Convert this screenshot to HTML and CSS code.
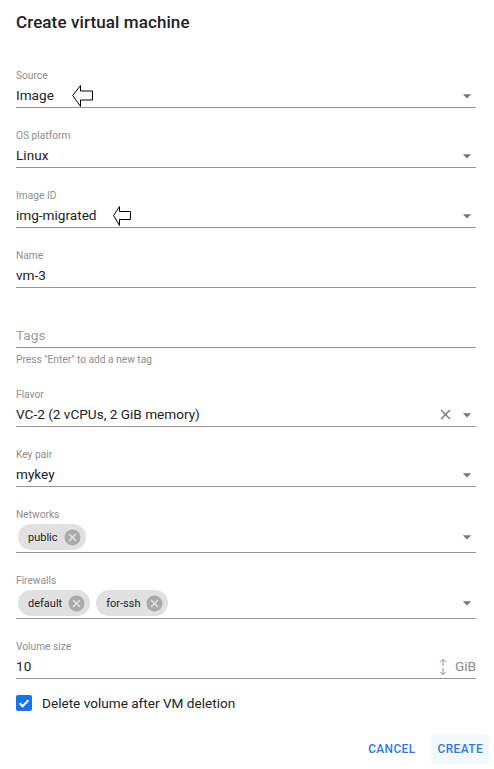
FILE: index.html
```html
<!DOCTYPE html>
<html lang="en">
<head>
<meta charset="utf-8">
<title>Create virtual machine</title>
<link rel="stylesheet" href="styles.css">
</head>
<body>
<div class="dialog">
  <h2 class="title">Create virtual machine</h2>
  <div class="content">
    <div class="field">
      <div class="label">Source</div>
      <div class="input">
        <span class="value">Image</span>
        <svg class="pointer" width="21" height="22" viewBox="0 0 21 22"><polygon points="0.7,10.5 8.5,0.5 8.5,6 20.5,6 20.5,15 8.5,15 8.5,21.5" fill="#fff" stroke="#000" stroke-width="1"/></svg>
        <span class="grow"></span>
        <svg class="dd" viewBox="0 0 24 24"><path d="M7 10l5 5 5-5z"/></svg>
      </div>
    </div>
    <div class="field">
      <div class="label">OS platform</div>
      <div class="input">
        <span class="value">Linux</span>
        <span class="grow"></span>
        <svg class="dd" viewBox="0 0 24 24"><path d="M7 10l5 5 5-5z"/></svg>
      </div>
    </div>
    <div class="field">
      <div class="label">Image ID</div>
      <div class="input">
        <span class="value">img-migrated</span>
        <svg class="pointer small" width="18" height="20" viewBox="0 0 18 20"><polygon points="0.6,9.5 6.5,0.5 6.5,5.5 17.5,5.5 17.5,13.5 6.5,13.5 6.5,19.5" fill="#fff" stroke="#000" stroke-width="1"/></svg>
        <span class="grow"></span>
        <svg class="dd" viewBox="0 0 24 24"><path d="M7 10l5 5 5-5z"/></svg>
      </div>
    </div>
    <div class="field">
      <div class="label">Name</div>
      <div class="input">
        <span class="value">vm-3</span>
      </div>
    </div>
    <div class="field">
      <div class="label"></div>
      <div class="input placeholder-row">
        <span class="placeholder">Tags</span>
      </div>
      <div class="helper">Press "Enter" to add a new tag</div>
    </div>
    <div class="field">
      <div class="label">Flavor</div>
      <div class="input">
        <span class="value">VC-2 (2 vCPUs, 2 GiB memory)</span>
        <span class="grow"></span>
        <svg class="clear" viewBox="0 0 24 24"><path d="M19 6.41L17.59 5 12 10.59 6.41 5 5 6.41 10.59 12 5 17.59 6.41 19 12 13.41 17.59 19 19 17.59 13.41 12z"/></svg>
        <svg class="dd" viewBox="0 0 24 24"><path d="M7 10l5 5 5-5z"/></svg>
      </div>
    </div>
    <div class="field">
      <div class="label">Key pair</div>
      <div class="input">
        <span class="value">mykey</span>
        <span class="grow"></span>
        <svg class="dd" viewBox="0 0 24 24"><path d="M7 10l5 5 5-5z"/></svg>
      </div>
    </div>
    <div class="field">
      <div class="label">Networks</div>
      <div class="input chips">
        <span class="chip"><span class="chip-label">public</span><svg class="chip-del" viewBox="0 0 24 24"><path d="M12 2C6.47 2 2 6.47 2 12s4.47 10 10 10 10-4.47 10-10S17.53 2 12 2zm5 13.59L15.59 17 12 13.41 8.41 17 7 15.59 10.59 12 7 8.41 8.41 7 12 10.59 15.59 7 17 8.41 13.41 12 17 15.59z"/></svg></span>
        <span class="grow"></span>
        <svg class="dd" viewBox="0 0 24 24"><path d="M7 10l5 5 5-5z"/></svg>
      </div>
    </div>
    <div class="field">
      <div class="label">Firewalls</div>
      <div class="input chips">
        <span class="chip"><span class="chip-label">default</span><svg class="chip-del" viewBox="0 0 24 24"><path d="M12 2C6.47 2 2 6.47 2 12s4.47 10 10 10 10-4.47 10-10S17.53 2 12 2zm5 13.59L15.59 17 12 13.41 8.41 17 7 15.59 10.59 12 7 8.41 8.41 7 12 10.59 15.59 7 17 8.41 13.41 12 17 15.59z"/></svg></span>
        <span class="chip"><span class="chip-label">for-ssh</span><svg class="chip-del" viewBox="0 0 24 24"><path d="M12 2C6.47 2 2 6.47 2 12s4.47 10 10 10 10-4.47 10-10S17.53 2 12 2zm5 13.59L15.59 17 12 13.41 8.41 17 7 15.59 10.59 12 7 8.41 8.41 7 12 10.59 15.59 7 17 8.41 13.41 12 17 15.59z"/></svg></span>
        <span class="grow"></span>
        <svg class="dd" viewBox="0 0 24 24"><path d="M7 10l5 5 5-5z"/></svg>
      </div>
    </div>
    <div class="field">
      <div class="label">Volume size</div>
      <div class="input">
        <span class="value">10</span>
        <span class="grow"></span>
        <svg class="spin" width="8" height="18" viewBox="0 0 8 18"><path d="M4 1.5V8M1.2 4.2L4 1.3 6.8 4.2M4 10v6.5M1.2 13.8L4 16.7 6.8 13.8" fill="none" stroke="#8f8f8f" stroke-width="1"/></svg>
        <span class="adorn">GiB</span>
      </div>
    </div>
    <label class="check-row">
      <span class="checkbox"><svg viewBox="0 0 16 16" width="16" height="16"><path d="M3.6 8.2l3 3 5.8-6" fill="none" stroke="#fff" stroke-width="2"/></svg></span>
      <span class="check-label">Delete volume after VM deletion</span>
    </label>
  </div>
  <div class="actions">
    <button class="btn">CANCEL</button>
    <button class="btn focused">CREATE</button>
  </div>
</div>
</body>
</html>
```

FILE: styles.css
```css
* { box-sizing: border-box; }
html, body { margin: 0; padding: 0; background: #fff; }
body {
  font-family: Roboto, "Liberation Sans", Arial, sans-serif;
  color: rgba(0, 0, 0, 0.87);
}
.dialog {
  width: 494px;
  height: 769px;
  display: flex;
  flex-direction: column;
}
.title {
  margin: 0;
  padding: 6px 18px 0 16px;
  font-size: 17px;
  font-weight: 500;
  line-height: 32px;
  color: #212121;
  letter-spacing: 0.1px;
}
.content {
  padding: 29px 18px 0 16px;
  display: flex;
  flex-direction: column;
}
.field + .field { margin-top: 19px; }
.label {
  height: 16px;
  font-size: 10.2px;
  line-height: 18px;
  color: #8d8d8d;
}
.input {
  display: flex;
  align-items: center;
  height: 25px;
  padding: 3px 0 2px;
  border-bottom: 1px solid #949494;
  font-size: 13.6px;
  line-height: 19px;
  color: #222;
}
.placeholder-row { padding: 3px 0 2px; }
.placeholder { color: #9a9a9a; }
.grow { flex: 1; }
.pointer { margin-left: 18px; display: block; }
.pointer.small { margin-left: 16px; }
.dd {
  width: 20px;
  height: 20px;
  fill: #767676;
  margin-right: -1px;
  display: block;
}
.clear {
  width: 17px;
  height: 17px;
  fill: #767676;
  margin-right: 3px;
  display: block;
}
.helper {
  margin-top: 4px;
  font-size: 10.2px;
  line-height: 15px;
  color: #8d8d8d;
}
.input.chips {
  height: 31px;
  padding: 2px 0 2px;
}
.chip {
  display: inline-flex;
  align-items: center;
  height: 26px;
  margin: 0 3px 0 2px;
  padding-left: 10px;
  border-radius: 13px;
  background: #e0e0e0;
  font-size: 11px;
  color: #222;
}
.chip + .chip { margin-left: 3px; }
.chip-label { padding-right: 10px; }
.chip-del {
  width: 19px;
  height: 19px;
  fill: #a9a9a9;
  margin: 0 4px 0 -5px;
  display: block;
}
.spin { display: block; margin-right: 8px; }
.adorn { color: #8a8a8a; }
.check-row {
  display: flex;
  align-items: center;
  margin-top: 16px;
  height: 16px;
}
.checkbox {
  width: 16px;
  height: 16px;
  border-radius: 2px;
  background: #1a73e8;
  display: block;
}
.checkbox svg { display: block; }
.check-label {
  margin-left: 10px;
  font-size: 13.6px;
  color: #222;
}
.actions {
  display: flex;
  justify-content: flex-end;
  gap: 9px;
  padding-right: 5px;
  margin-top: 23px;
}
.btn {
  height: 30px;
  padding: 0 6px 0 7px;
  border: none;
  border-radius: 3px;
  background: transparent;
  font-family: Roboto, "Liberation Sans", Arial, sans-serif;
  font-size: 11.9px;
  font-weight: 500;
  letter-spacing: 0.4px;
  color: #2a7be4;
}
.btn.focused { background: #f3f7fe; }
```
